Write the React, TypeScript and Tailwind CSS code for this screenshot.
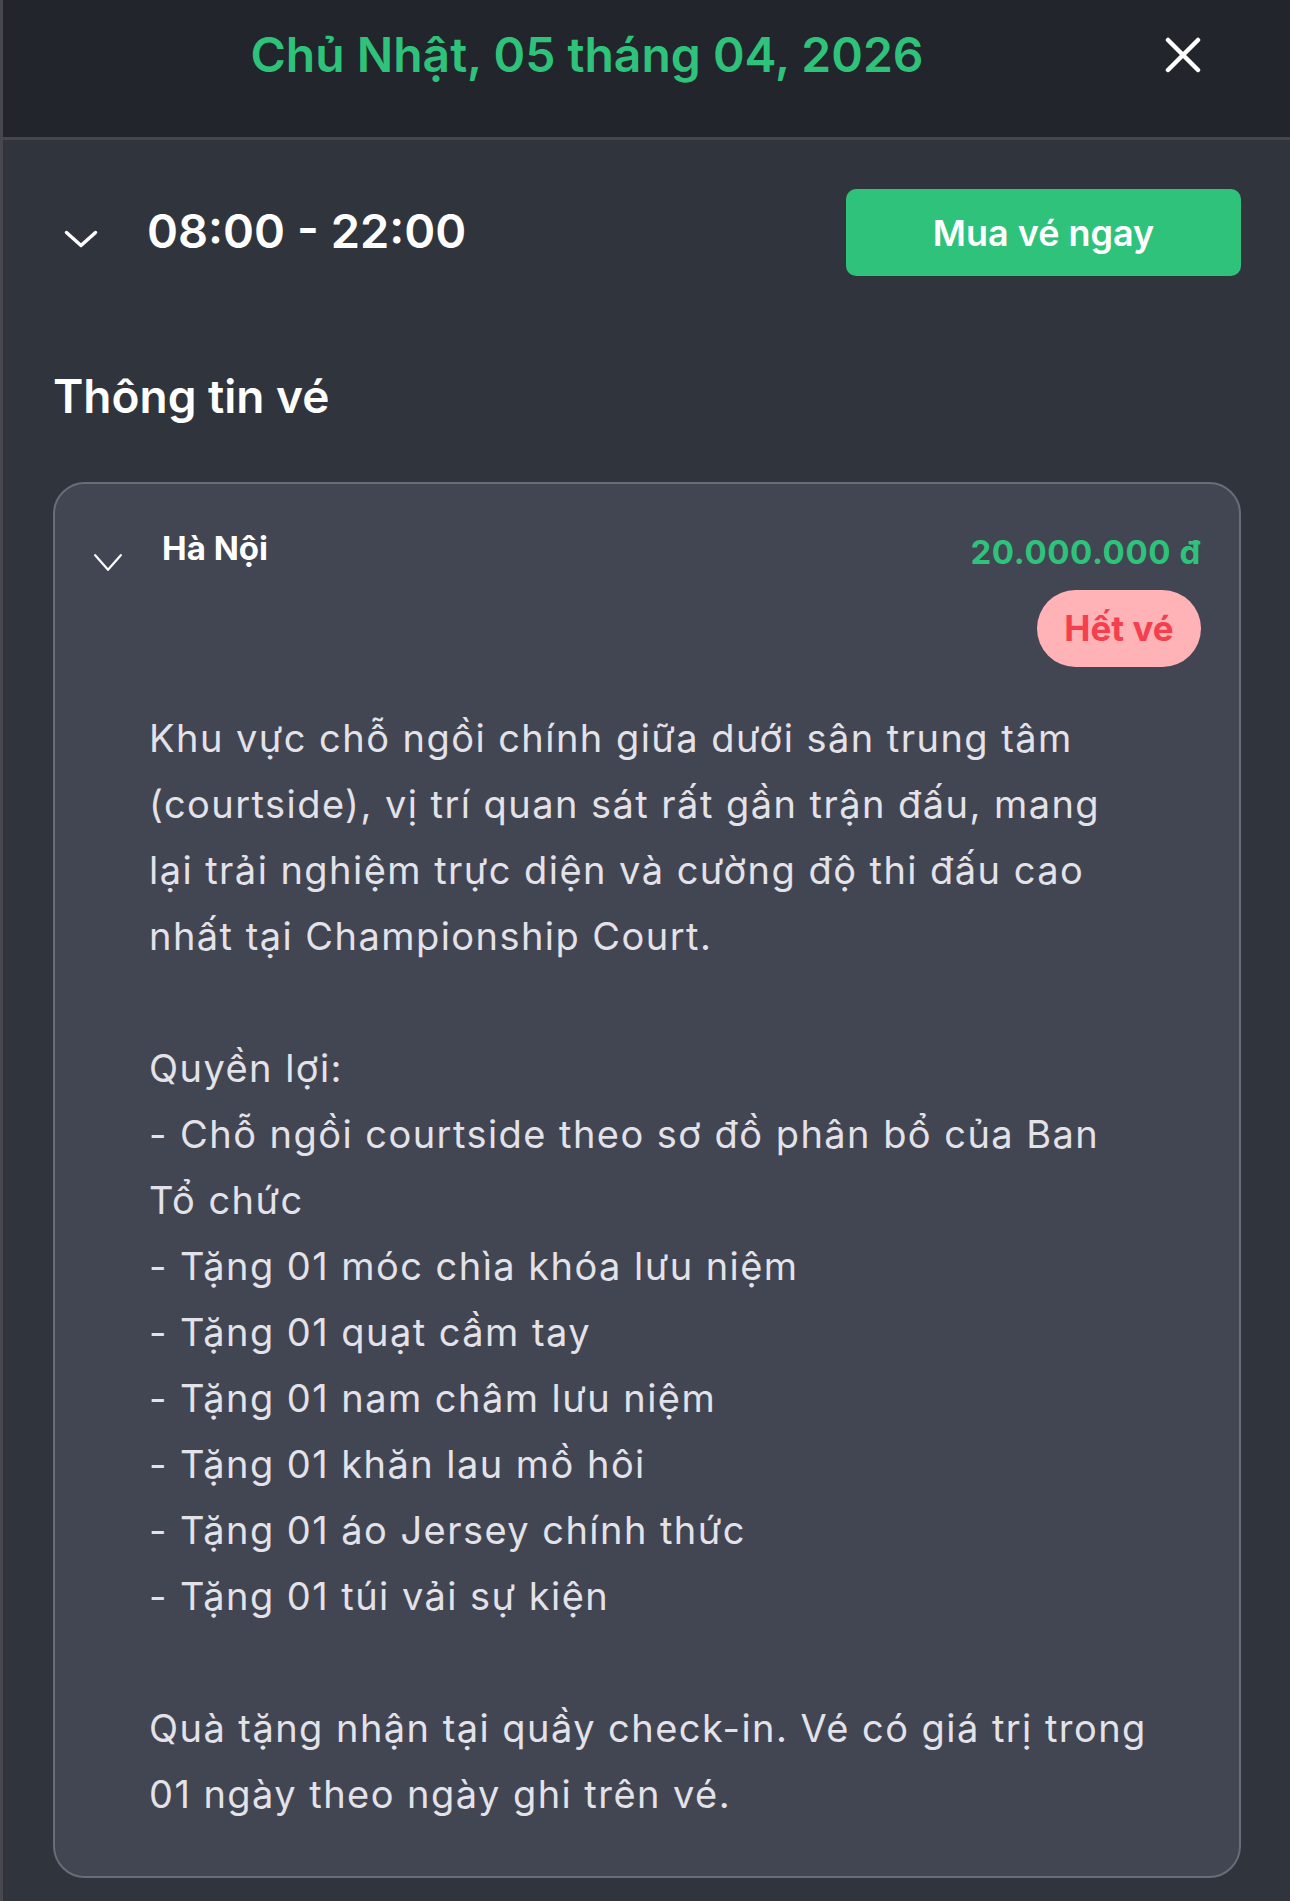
import React from "react";

const description = `Khu vực chỗ ngồi chính giữa dưới sân trung tâm
(courtside), vị trí quan sát rất gần trận đấu, mang
lại trải nghiệm trực diện và cường độ thi đấu cao
nhất tại Championship Court.

Quyền lợi:
- Chỗ ngồi courtside theo sơ đồ phân bổ của Ban
Tổ chức
- Tặng 01 móc chìa khóa lưu niệm
- Tặng 01 quạt cầm tay
- Tặng 01 nam châm lưu niệm
- Tặng 01 khăn lau mồ hôi
- Tặng 01 áo Jersey chính thức
- Tặng 01 túi vải sự kiện

Quà tặng nhận tại quầy check-in. Vé có giá trị trong
01 ngày theo ngày ghi trên vé.`;

function Chevron({ w, h, stroke }: { w: number; h: number; stroke: number }) {
  const p = stroke;
  return (
    <svg width={w} height={h} viewBox={`0 0 ${w} ${h}`} fill="none">
      <polyline
        points={`${p},${p} ${w / 2},${h - p} ${w - p},${p}`}
        stroke="white"
        strokeWidth={stroke}
        strokeLinecap="round"
        strokeLinejoin="round"
      />
    </svg>
  );
}

export default function App() {
  return (
    <div className="w-[1290px] h-[1901px] overflow-hidden bg-[#30343c] border-l-[3px] border-[#47484d] font-['Inter','Noto_Sans',sans-serif] text-white">
      {/* Header */}
      <div className="h-[140px] bg-[#22252c] border-b-[3px] border-[#46474b] flex items-start pt-[31px]">
        <div className="flex-1 text-center pl-[6px] text-[48px] leading-[48px] font-semibold text-[#2ec27a]">
          Chủ Nhật, 05 tháng 04, 2026
        </div>
        <button className="mt-[6px] mr-[89px] w-[36px] h-[36px]">
          <svg width="36" height="36" viewBox="0 0 36 36" fill="none">
            <path
              d="M3 3 L33 33 M33 3 L3 33"
              stroke="white"
              strokeWidth="4.5"
              strokeLinecap="round"
            />
          </svg>
        </button>
      </div>

      <div className="pl-[50px] pr-[49px]">
        {/* Time row */}
        <div className="mt-[49px] h-[87px] flex items-center justify-between">
          <div className="flex items-center">
            <div className="ml-[10px] translate-y-[6px]">
              <Chevron w={36} h={20} stroke={3.5} />
            </div>
            <span className="ml-[48px] text-[47px] leading-[48px] font-semibold -translate-y-[2px]">
              08:00 - 22:00
            </span>
          </div>
          <button className="w-[395px] h-[87px] rounded-[10px] bg-[#2ec27a] text-[36px] font-semibold leading-none">
            Mua vé ngay
          </button>
        </div>

        <h2 className="mt-[96px] text-[46px] leading-[48px] font-semibold">
          Thông tin vé
        </h2>

        {/* Ticket card */}
        <div className="mt-[62px] rounded-[32px] border-2 border-[#6a6d77] bg-[#424552] pt-[48px] pb-[49px]">
          <div className="flex justify-between pl-[38px] pr-[38px]">
            <div className="flex items-start">
              <div className="mt-[21px]">
                <Chevron w={30} h={19} stroke={2.2} />
              </div>
              <span className="ml-[39px] text-[33px] leading-[33px] font-bold">
                Hà Nội
              </span>
            </div>
            <div className="flex flex-col items-end">
              <span className="mt-[4px] text-[33px] leading-[33px] font-bold tracking-[0.6px] text-[#2ec27a]">
                20.000.000 đ
              </span>
              <div className="mt-[21px] w-[164px] h-[77px] rounded-full bg-[#ffb3b6] flex items-center justify-center text-[35px] font-bold leading-none text-[#f43f4f]">
                Hết vé
              </div>
            </div>
          </div>

          <p className="mt-[38px] pl-[94px] whitespace-pre text-[38px] leading-[66px] tracking-[1.45px] text-[#e2e2e8]">
            {description}
          </p>
        </div>
      </div>
    </div>
  );
}
